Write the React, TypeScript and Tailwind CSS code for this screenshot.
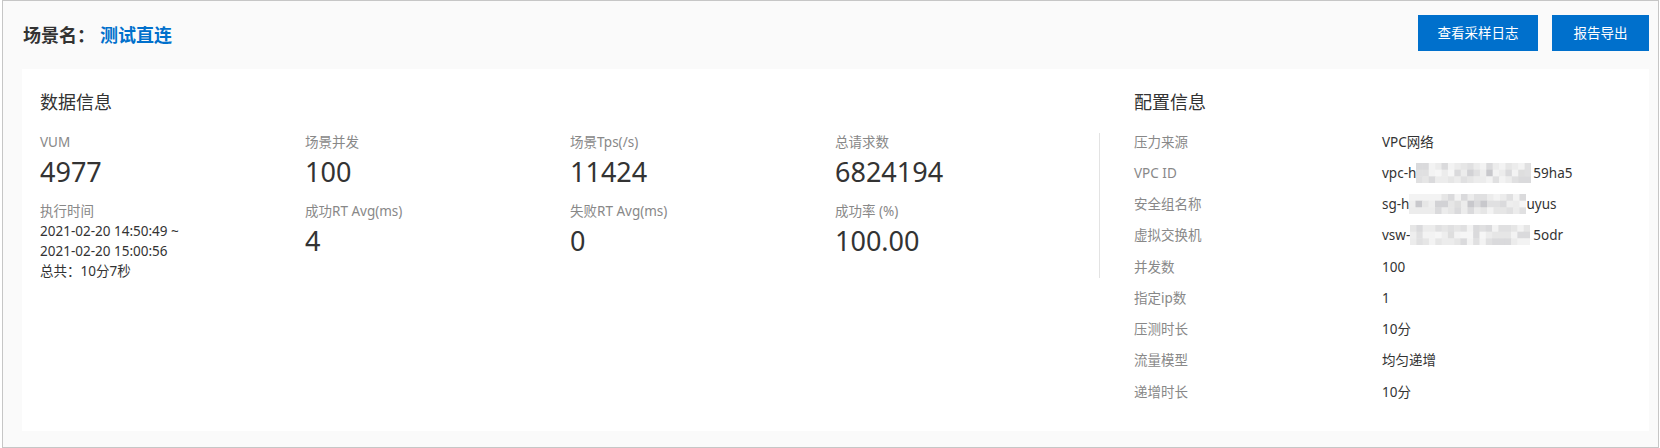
import React from "react";

// stat blocks on the left side of the card
interface Stat {
    label: string;
    value: string;
}

const statColumns: { top: Stat; bottom?: Stat }[] = [
    { top: { label: "VUM", value: "4977" } },
    { top: { label: "场景并发", value: "100" }, bottom: { label: "成功RT Avg(ms)", value: "4" } },
    { top: { label: "场景Tps(/s)", value: "11424" }, bottom: { label: "失败RT Avg(ms)", value: "0" } },
    { top: { label: "总请求数", value: "6824194" }, bottom: { label: "成功率 (%)", value: "100.00" } },
];

// blurred (pixelated) part of an id
const Mosaic = ({ width, seed }: { width: number; seed: number }) => {
    const shades = ["#f3f3f3", "#ececec", "#e6e6e6", "#e0e0e1", "#dadadc", "#d2d2d5", "#c8c8cc", "#eeeeee", "#f6f6f6", "#dedede"];
    const cols = Math.round(width / 6.4);
    const cw = width / cols;
    const rows = 3;
    const ch = 20 / rows;
    let s = seed;
    const next = () => {
        s = (s * 9301 + 49297) % 233280;
        return s / 233280;
    };
    const cells = [];
    for (let r = 0; r < rows; r++) {
        for (let c = 0; c < cols; c++) {
            const v = next();
            const shade = r === 1 ? shades[Math.floor(v * shades.length)] : shades[Math.floor(v * 5)];
            cells.push(<rect key={r + "-" + c} x={c * cw} y={r * ch} width={cw + 0.5} height={ch + 0.5} fill={shade} />);
        }
    }
    return (
        <svg width={width} height={20} className="block">
            {cells}
        </svg>
    );
};

const configRows: { label: string; value: React.ReactNode }[] = [
    { label: "压力来源", value: "VPC网络" },
    { label: "VPC ID", value: <><span>vpc-h</span><Mosaic width={115} seed={17} /><span className="ml-[2px]">59ha5</span></> },
    { label: "安全组名称", value: <><span>sg-h</span><Mosaic width={117} seed={71} /><span>uyus</span></> },
    { label: "虚拟交换机", value: <><span>vsw-</span><Mosaic width={120} seed={133} /><span className="ml-[3px]">5odr</span></> },
    { label: "并发数", value: "100" },
    { label: "指定ip数", value: "1" },
    { label: "压测时长", value: "10分" },
    { label: "流量模型", value: "均匀递增" },
    { label: "递增时长", value: "10分" },
];

const StatBlock = ({ stat, className }: { stat: Stat; className?: string }) => (
    <div className={className}>
        <div className="text-[13.5px] leading-[20px] text-[#888888]">{stat.label}</div>
        <div className="mt-[2px] text-[27px] leading-[36px] text-[#333333]">{stat.value}</div>
    </div>
);

const App: React.FC = () => {
    return (
        <div className="w-[1660px] h-[448px] bg-white pl-[2px] pr-px font-['Noto_Sans','Noto_Sans_CJK_SC',sans-serif]">
            <div className="h-full border border-[#c6c6c6] bg-[#fafafa] pl-[19px] pr-[9px]">
                {/* header */}
                <div className="h-[68px] pt-[14px] flex items-start justify-between">
                    <div className="h-[36px] pt-[3px] pl-px flex items-center text-[18px] leading-[24px] font-bold">
                        <span className="text-[#333333]">场景名：</span>
                        <span className="ml-[5px] text-[#0070cc]">测试直连</span>
                    </div>
                    <div className="flex gap-[14px]">
                        <button className="w-[120px] h-[36px] bg-[#0070cc] text-white text-[13.5px] flex items-center justify-center">
                            查看采样日志
                        </button>
                        <button className="w-[97px] h-[36px] bg-[#0070cc] text-white text-[13.5px] flex items-center justify-center">
                            报告导出
                        </button>
                    </div>
                </div>

                {/* card */}
                <div className="bg-white flex h-[362px]">
                    <div className="w-[1077px] pl-[18px] pt-[21px]">
                        <div className="text-[18px] leading-[24px] text-[#333333]">数据信息</div>
                        <div className="mt-[17.5px] flex">
                            {statColumns.map((col, i) => (
                                <div key={i} className={i === 3 ? "w-[264px]" : "w-[265px]"}>
                                    <StatBlock stat={col.top} />
                                    {col.bottom ? (
                                        <StatBlock stat={col.bottom} className="mt-[11px]" />
                                    ) : (
                                        <div className="mt-[11px]">
                                            <div className="text-[13.5px] leading-[20px] text-[#888888]">执行时间</div>
                                            <div className="text-[13.5px] leading-[20px] text-[#333333]">
                                                <div>2021-02-20 14:50:49 ~</div>
                                                <div>2021-02-20 15:00:56</div>
                                                <div>总共：10分7秒</div>
                                            </div>
                                        </div>
                                    )}
                                </div>
                            ))}
                        </div>
                    </div>

                    <div className="w-px h-[145px] mt-[64px] bg-[#e3e3e3]" />

                    <div className="flex-1 pl-[34px] pt-[21px]">
                        <div className="text-[18px] leading-[24px] text-[#333333]">配置信息</div>
                        <div className="mt-[12px]">
                            {configRows.map(row => (
                                <div key={row.label} className="h-[31.25px] flex items-center text-[13.5px]">
                                    <div className="w-[248px] text-[#888888]">{row.label}</div>
                                    <div className="flex items-center text-[#333333]">{row.value}</div>
                                </div>
                            ))}
                        </div>
                    </div>
                </div>
            </div>
        </div>
    );
};

export default App;
